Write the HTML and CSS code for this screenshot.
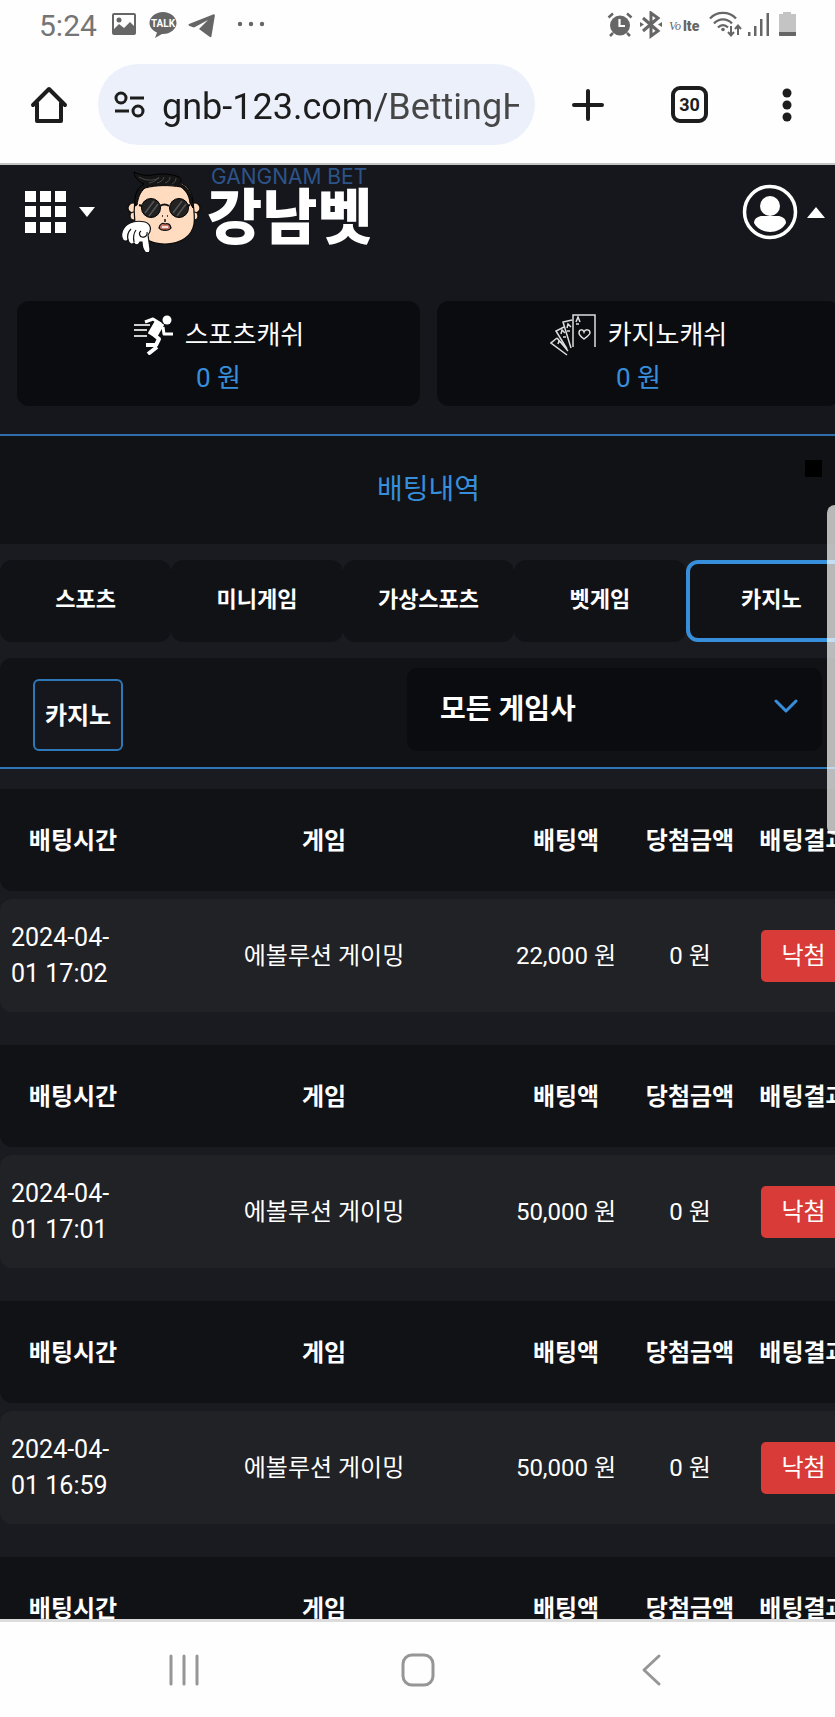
FILE: index.html
```html
<!DOCTYPE html>
<html lang="ko">
<head>
  <meta charset="UTF-8">
  <meta name="viewport" content="width=device-width, initial-scale=1.0">
  <title>강남벳</title>
  <link rel="stylesheet" href="styles.css">
</head>
<body>
  <!-- Phone status bar -->
  <div class="status-bar">
    <span class="clock">5:24</span>
    <svg class="status-left" width="154" height="28" viewBox="0 0 154 28" fill="#666">
      <path fill-rule="evenodd" d="M3 2h20a2 2 0 0 1 2 2v18a2 2 0 0 1-2 2H3a2 2 0 0 1-2-2V4a2 2 0 0 1 2-2zm0 2v14l5-5 5 4 6-6 4 4V4z"/>
      <circle cx="8" cy="9" r="2.5"/>
      <path d="M52 1c7.500 0 13.500 5 13.500 11S59.500 23 52 23h-1l-7 4 2-5.500c-4.500-2-7.500-5.500-7.500-9.500C38.500 6 44.500 1 52 1z"/>
      <text class="talk" x="52" y="16" text-anchor="middle">TALK</text>
      <path d="M78 13 102 3.500c1.500-.5 2 .3 1.800 1.600L100.500 25c-.2 1.500-1 1.500-2 .8L88 18l9-9-14 7.500-4.500-1.500c-1-.5-1.500-1.300-.5-2z"/>
      <circle cx="129" cy="13" r="2.200"/><circle cx="140" cy="13" r="2.200"/><circle cx="151" cy="13" r="2.200"/>
    </svg>
    <svg class="status-right" width="192" height="28" viewBox="0 0 192 28" fill="#666">
      <circle cx="14" cy="14.500" r="10"/>
      <path d="M2.500 6.500 7 2.500M25.500 6.500 21 2.500M7 22l-3 3M21 22l3 3" stroke="#666" stroke-width="2.500" fill="none"/>
      <path d="M13.500 8v7h5.500" stroke="#fff" stroke-width="2.200" fill="none"/>
      <path d="M37 7l15 13-7 5V2l7 5-15 13" stroke="#666" stroke-width="3" fill="none"/>
      <path d="M34 11l4 2.500-4 2.500zM56 11l-4 2.500 4 2.500z"/>
      <text class="volte-vo" x="63" y="19">Vo</text>
      <text class="volte-lte" x="77" y="20">lte</text>
      <g fill="none" stroke="#666" stroke-width="2.300">
        <path d="M104 7.500c7-7.500 19-7.500 26 0M108 12.500c5-5.500 13-5.500 18 0M112 16.500c3-3 7-3 10 0"/>
        <path d="M125 15v9m-3-3 3 3.500 3-3.500M132 24v-9m-3 3 3-3.500 3 3.500" stroke-width="2"/>
      </g>
      <circle cx="117" cy="18.500" r="1.800"/>
      <path d="M142 21h2.500v4H142zM148 15h2.500v10H148zM154 8h2.500v17H154zM160.500 2h2.500v23h-2.500z"/>
      <path d="M177 1h8v2h5v22h-17V3h4z" fill="#c4c4c4"/>
      <path d="M173 21h17v3a1 1 0 0 1-1 1h-15a1 1 0 0 1-1-1z"/>
    </svg>
  </div>

  <!-- Browser toolbar -->
  <div class="toolbar">
    <button class="tool" aria-label="Home">
      <svg width="38" height="38" viewBox="0 0 38 38" fill="none" stroke="#1d1d1d" stroke-width="4" stroke-linecap="round" stroke-linejoin="round"><path d="M3 19 19 3l16 16M7 17v18h24V17"/></svg>
    </button>
    <div class="url-pill">
      <svg width="32" height="28" viewBox="0 0 32 28" fill="none" stroke="#1d1d1d" stroke-width="3"><circle cx="7" cy="7" r="5"/><path d="M16 7h14M1 20h14"/><circle cx="24" cy="20" r="5"/></svg>
      <input class="url" type="text" value="gnb-123.com/BettingH" aria-label="Address">
    </div>
    <button class="tool" aria-label="New tab">
      <svg width="34" height="34" viewBox="0 0 34 34" stroke="#1d1d1d" stroke-width="4" stroke-linecap="round"><path d="M17 3v28M3 17h28"/></svg>
    </button>
    <button class="tool tab-count">30</button>
    <button class="tool" aria-label="Menu">
      <svg width="10" height="36" viewBox="0 0 10 36" fill="#1d1d1d"><circle cx="5" cy="6" r="4.500"/><circle cx="5" cy="18" r="4.500"/><circle cx="5" cy="30" r="4.500"/></svg>
    </button>
  </div>

  <div class="viewport">
    <div class="page">
      <header class="header">
        <button class="header-btn" aria-label="메뉴">
          <svg width="42" height="42" viewBox="0 0 42 42" fill="#fff"><path d="M0 0h11v11H0zM15 0h11v11H15zM30 0h11v11H30zM0 15h11v11H0zM15 15h11v11H15zM30 15h11v11H30zM0 31h11v11H0zM15 31h11v11H15zM30 31h11v11H30z"/></svg>
          <svg width="16" height="10" viewBox="0 0 16 10" fill="#fff"><path d="M0 0h16L8 10z"/></svg>
        </button>
        <a class="logo" href="#">
          <svg class="logo-face" width="82" height="84" viewBox="0 0 82 84">
            <g fill="#ffdcc0" stroke="#0a0a0a" stroke-width="1.200">
              <circle cx="12" cy="40" r="5"/><circle cx="13" cy="48" r="4"/>
              <circle cx="74" cy="40" r="5"/><circle cx="73" cy="48" r="4"/>
              <path d="M14 30c2-12 12-18 30-18s27 8 28 22c1 8 2 16 1 22-2 12-13 20-29 20S16 68 14 56c-1-8-1-18 0-26z"/>
            </g>
            <path d="M14 38c-1-12 3-19 9-22C18 14 13 9 13 4c6 3 12 4 18 3 10-2 20-1 27 2 3 2 2 5 1 7 8 3 13 11 13 24l-3-5c-1-8-4-12-9-16-12-2-25-2-36 1-5 4-7 10-8 17z" fill="#151515" stroke="#000"/>
            <path d="M18 9c7 4 14 4 20 1M28 15c5-1 8-3 10-6M36 15c4-1 6-3 7-6M44 15c3-1 5-3 5-6M51 16c2-1 4-3 4-6" fill="none" stroke="#555" stroke-width=".8"/>
            <path d="M18 37l3 1M69 37l-3 1M39 38c3-2 6-2 9 0" fill="none" stroke="#111" stroke-width="2"/>
            <circle cx="30" cy="40" r="9.500" fill="#222" stroke="#000"/><circle cx="58" cy="40" r="9.500" fill="#222" stroke="#000"/>
            <path d="M24 45l9-12M28 48l9-12M52 45l9-12M56 48l9-12" stroke="#555" stroke-width="1.500"/>
            <path d="M41 48h1M46 48h1M44 51v3" stroke="#111" stroke-width="1.500"/>
            <path d="M38 60c1-5 4-5 6-4 3-1 5 0 6 4-2 3-10 3-12 0z" fill="#c9796a" stroke="#111" stroke-width="1.300"/>
            <path d="M41 59h6" stroke="#fff" stroke-width="1.500"/>
            <path d="M27 67c4-5 3-11-3-13-8-2-17 0-21 6-3 4-3 9-1 12 2 2 4 1 5 0 1 4 4 5 6 3 2 3 5 2 6-1l2 0c0 5 2 9 4 11 3 1 4-1 4-4z" fill="#fff" stroke="#111" stroke-width="1.200"/>
            <path d="M7 72c-1-4 0-8 3-11M13 74c-1-5-1-8 2-12M20 63c-3 2-1 6 1 6 3 1 6-2 5-5" fill="none" stroke="#111" stroke-width="1.200"/>
          </svg>
          <span class="logo-text">
            <span class="logo-en">GANGNAM BET</span>
            <span class="logo-ko">강남벳</span>
          </span>
        </a>
        <button class="header-btn account" aria-label="내 정보">
          <svg width="56" height="56" viewBox="0 0 56 56" fill="#fff"><circle cx="28" cy="28" r="25.500" fill="none" stroke="#fff" stroke-width="3.500"/><circle cx="28" cy="22" r="10"/><path d="M12 39c0-5 5-7 8-7h16c3 0 8 2 8 7-3 6-10 9-16 9s-13-3-16-9z"/></svg>
          <svg width="18" height="11" viewBox="0 0 18 11" fill="#fff"><path d="M0 11h18L9 0z"/></svg>
        </button>
      </header>

      <div class="cash-list">
        <div class="cash">
          <div class="cash-name">
            <svg width="40" height="40" viewBox="0 0 40 40" fill="none" stroke="#fff" stroke-linejoin="round">
              <circle cx="34" cy="5" r="4.500" fill="#fff" stroke="none"/>
              <path d="M12 7l8-3 8 5" stroke-width="3"/>
              <path d="M30 12l1 7h9" stroke-width="3"/>
              <path d="M23 6l7 4-7 12-7-4z" fill="#fff" stroke-width="2"/>
              <path d="M19 18l7 6-3 6H13" stroke-width="4"/>
              <path d="M24 32l-9 7" stroke-width="4"/>
              <path d="M1 10h16M1 15h13M1 21h13" stroke-width="2" opacity=".8"/>
            </svg>
            스포츠캐쉬
          </div>
          <div class="cash-amount">0 원</div>
        </div>
        <div class="cash">
          <div class="cash-name">
            <svg width="46" height="42" viewBox="0 0 46 42" fill="none" stroke="#ddd" stroke-width="1.500">
              <path d="M23 33V1h22v32M22 6l-9 2 8 26M14 13l-8 4 11 18M7 24l-6 5 16 12M7 24l11 13"/>
              <path d="M34 25c-4-3-5-5-5-6 0-4 4-4 5-1 1-3 6-3 6 1 0 1-2 3-6 6zM26 8l2-5 2 5M26 10h3M17 14l1-4 3 3M17 17h3M11 20l1-4 3 3M13 23h3M8 30l1-3 3 2"/>
            </svg>
            카지노캐쉬
          </div>
          <div class="cash-amount">0 원</div>
        </div>
      </div>

      <div class="title-bar">
        <h1>배팅내역</h1>
        <span class="title-mark"></span>
      </div>

      <nav class="tabs">
        <button class="tab">스포츠</button>
        <button class="tab">미니게임</button>
        <button class="tab">가상스포츠</button>
        <button class="tab">벳게임</button>
        <button class="tab active">카지노</button>
      </nav>

      <div class="filter">
        <button class="filter-btn">카지노</button>
        <div class="select-box">
          <select aria-label="게임사">
            <option>모든 게임사</option>
          </select>
          <svg width="24" height="14" viewBox="0 0 24 14" fill="none" stroke="#378fdc" stroke-width="3" stroke-linecap="round" stroke-linejoin="round"><path d="M2 2l10 10L22 2"/></svg>
        </div>
      </div>

      <div class="bets">
        <table class="bet">
          <thead>
            <tr><th class="col-time">배팅시간</th><th>게임</th><th class="col-bet">배팅액</th><th class="col-win">당첨금액</th><th class="col-result">배팅결과</th></tr>
          </thead>
          <tbody>
            <tr><td class="time">2024-04-<wbr>01 17:02</td><td>에볼루션 게이밍</td><td>22,000 원</td><td>0 원</td><td class="result"><span class="badge">낙첨</span></td></tr>
          </tbody>
        </table>
        <table class="bet">
          <thead>
            <tr><th class="col-time">배팅시간</th><th>게임</th><th class="col-bet">배팅액</th><th class="col-win">당첨금액</th><th class="col-result">배팅결과</th></tr>
          </thead>
          <tbody>
            <tr><td class="time">2024-04-<wbr>01 17:01</td><td>에볼루션 게이밍</td><td>50,000 원</td><td>0 원</td><td class="result"><span class="badge">낙첨</span></td></tr>
          </tbody>
        </table>
        <table class="bet">
          <thead>
            <tr><th class="col-time">배팅시간</th><th>게임</th><th class="col-bet">배팅액</th><th class="col-win">당첨금액</th><th class="col-result">배팅결과</th></tr>
          </thead>
          <tbody>
            <tr><td class="time">2024-04-<wbr>01 16:59</td><td>에볼루션 게이밍</td><td>50,000 원</td><td>0 원</td><td class="result"><span class="badge">낙첨</span></td></tr>
          </tbody>
        </table>
        <table class="bet">
          <thead>
            <tr><th class="col-time">배팅시간</th><th>게임</th><th class="col-bet">배팅액</th><th class="col-win">당첨금액</th><th class="col-result">배팅결과</th></tr>
          </thead>
        </table>
      </div>
    </div>
    <div class="scroll-thumb"></div>
  </div>

  <!-- Phone navigation bar -->
  <div class="nav-bar">
    <button class="nav-btn" aria-label="Recents">
      <svg width="34" height="34" viewBox="0 0 34 34" stroke="#969696" stroke-width="3" stroke-linecap="round"><path d="M4 3v28M17 3v28M30 3v28"/></svg>
    </button>
    <button class="nav-btn" aria-label="Home">
      <svg width="34" height="34" viewBox="0 0 34 34" fill="none" stroke="#969696" stroke-width="3"><rect x="2" y="2" width="30" height="30" rx="9"/></svg>
    </button>
    <button class="nav-btn" aria-label="Back">
      <svg width="34" height="34" viewBox="0 0 34 34" fill="none" stroke="#969696" stroke-width="3" stroke-linecap="round" stroke-linejoin="round"><path d="M25 3 10 17l15 14"/></svg>
    </button>
  </div>
</body>
</html>
```
FILE: styles.css
```css
* {
  box-sizing: border-box;
}
html, body {
  height: 100%;
  margin: 0;
  padding: 0;
}
body {
  display: flex;
  flex-direction: column;
  background: #fefefe;
  color: #fff;
  font-family: Roboto, "Noto Sans CJK KR", sans-serif;
  font-size: 24px;
  overflow: hidden;
}
button, input, select {
  font-family: inherit;
  color: inherit;
  border: none;
  background: none;
  margin: 0;
  padding: 0;
}
button {
  cursor: pointer;
}
svg {
  display: block;
  flex: none;
}

/* Status bar */
.status-bar {
  display: flex;
  align-items: center;
  height: 50px;
  padding: 0 37px 0 39px;
}
.clock {
  color: #757575;
  font-size: 30px;
}
.status-left {
  margin-left: 14px;
}
.status-right {
  margin-left: auto;
}
.talk {
  font: 700 10px Roboto, sans-serif;
  fill: #fff;
}
.volte-vo {
  font: italic 12px "Liberation Serif", serif;
}
.volte-lte {
  font: 900 14px Roboto, sans-serif;
}

/* Toolbar */
.toolbar {
  display: flex;
  align-items: center;
  height: 115px;
  padding: 0 43px 4px 30px;
  border-bottom: 2px solid #c4c4c4;
}
.tool {
  flex: none;
}
.url-pill {
  display: flex;
  align-items: center;
  gap: 16px;
  flex: 1;
  min-width: 0;
  height: 81px;
  margin: 0 36px 0 30px;
  padding: 0 16px;
  border-radius: 41px;
  background: #ebf0fa;
}
.url {
  flex: 1;
  min-width: 0;
  padding-top: 4px;
  font-size: 36px;
  background: linear-gradient(90deg, #1d1d1d 55%, #474747 65%);
  background-clip: text;
  -webkit-text-fill-color: transparent;
  outline: none;
}
.tab-count {
  width: 37px;
  height: 37px;
  margin: 0 74px 0 66px;
  border: 4px solid #1d1d1d;
  border-radius: 9px;
  color: #1d1d1d;
  font-size: 18px;
  font-weight: 700;
}

/* Page area */
.viewport {
  position: relative;
  flex: 1;
  min-height: 0;
  overflow: hidden;
  background: #1a1b20;
}
.page {
  min-width: 857px;
}
.scroll-thumb {
  position: absolute;
  top: 340px;
  right: 0;
  width: 8px;
  height: 330px;
  border-radius: 8px 0 0 8px;
  background: rgba(255, 255, 255, 0.7);
}

.header {
  display: flex;
  align-items: center;
  height: 94px;
  padding: 0 32px 0 25px;
  background: #16171c;
}
.header-btn {
  display: flex;
  align-items: center;
  gap: 12px;
}
.account {
  gap: 9px;
  margin-left: auto;
}
.logo {
  display: flex;
  align-self: flex-start;
  align-items: flex-start;
  gap: 4px;
  margin-left: 26px;
  text-decoration: none;
}
.logo-face {
  margin-top: 3px;
}
.logo-text {
  display: flex;
  flex-direction: column;
}
.logo-en {
  padding-left: 4px;
  color: #2d5488;
  font-family: Inter, sans-serif;
  font-size: 21px;
  line-height: 24px;
}
.logo-ko {
  color: #fff;
  font-size: 60px;
  font-weight: 900;
  line-height: 60px;
}

/* Cash */
.cash-list {
  display: grid;
  grid-template-columns: 1fr 1fr;
  gap: 17px;
  padding: 42px 17px 28px;
  background: #16171c;
}
.cash {
  height: 105px;
  padding: 13px 0;
  border-radius: 12px;
  background: #0b0c10;
  font-size: 26px;
  text-align: center;
}
.cash-name {
  display: flex;
  align-items: center;
  justify-content: center;
  gap: 12px;
  line-height: 42px;
}
.cash-amount {
  color: #378fdc;
  line-height: 44px;
}

/* Title */
.title-bar {
  position: relative;
  height: 110px;
  border-top: 2px solid #2f6ea8;
  background: #111216;
}
.title-bar h1 {
  margin: 0;
  color: #378fdc;
  font-size: 28px;
  font-weight: 400;
  line-height: 108px;
  text-align: center;
}
.title-mark {
  position: absolute;
  top: 24px;
  right: 35px;
  width: 17px;
  height: 17px;
  background: #000;
}

/* Tabs */
.tabs {
  display: grid;
  grid-template-columns: repeat(5, 1fr);
  padding: 16px 0;
}
.tab {
  height: 82px;
  padding-bottom: 8px;
  border-radius: 12px;
  background: #111216;
  font-size: 22px;
  font-weight: 700;
}
.tab.active {
  border: 4px solid #378fdc;
}

/* Filter */
.filter {
  display: flex;
  justify-content: space-between;
  align-items: flex-start;
  height: 111px;
  padding: 10px 35px 0 33px;
  border-bottom: 2px solid #2f78b8;
  border-radius: 12px 0 0 0;
  background: #111216;
}
.filter-btn {
  width: 90px;
  height: 72px;
  margin-top: 11px;
  padding-bottom: 4px;
  border: 2px solid #2f78b8;
  border-radius: 6px;
  background: #16171c;
  font-size: 24px;
  font-weight: 700;
}
.select-box {
  position: relative;
  width: 415px;
  height: 83px;
  border-radius: 10px;
  background: #0b0c10;
}
.select-box select {
  width: 100%;
  height: 100%;
  padding: 0 33px;
  appearance: none;
  font-size: 28px;
  font-weight: 700;
}
.select-box svg {
  position: absolute;
  top: 31px;
  right: 24px;
  pointer-events: none;
}

/* Bets */
.bets {
  padding-top: 12px;
}
.bet {
  width: 100%;
  margin-bottom: 17px;
  table-layout: fixed;
  border-spacing: 0 8px;
  text-align: center;
}
.bet th, .bet td {
  padding: 0 0 4px;
  white-space: nowrap;
}
.bet th {
  height: 102px;
  background: #111216;
  font-weight: 700;
}
.bet td {
  height: 113px;
  background: #212226;
}
.bet th:first-child {
  border-radius: 0 0 0 12px;
}
.bet td:first-child {
  border-radius: 12px 0 0 12px;
}
.bet .time {
  padding: 0 30px 0 11px;
  font-size: 25px;
  line-height: 36px;
  text-align: left;
  white-space: normal;
}
.bet .result {
  padding: 0;
}
.col-time {
  width: 146px;
}
.col-bet {
  width: 128px;
}
.col-win {
  width: 120px;
}
.col-result {
  width: 107px;
}
.badge {
  display: inline-block;
  padding: 0 20px;
  border-radius: 5px;
  background: #d93b38;
  line-height: 52px;
}

/* Phone nav */
.nav-bar {
  display: flex;
  height: 98px;
  padding: 0 67px;
  border-top: 3px solid #dcdcdc;
}
.nav-btn {
  display: flex;
  flex: 1;
  align-items: center;
  justify-content: center;
}
```
